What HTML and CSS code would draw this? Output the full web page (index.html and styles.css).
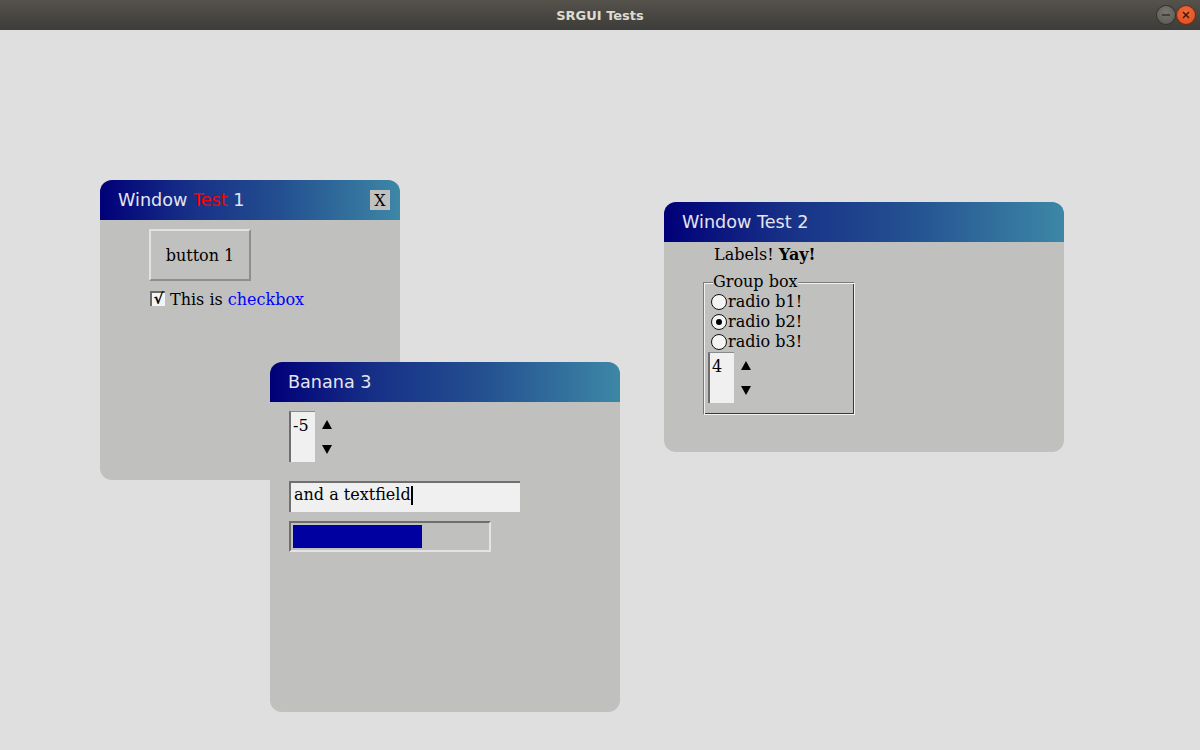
FILE: index.html
```html
<!DOCTYPE html>
<html>
<head>
<meta charset="utf-8">
<title>SRGUI Tests</title>
<link rel="stylesheet" href="styles.css">
</head>
<body>
<div class="topbar">
  <span class="app-title">SRGUI Tests</span>
  <div class="wm-btns">
    <span class="wm-btn wm-min"><svg width="18" height="18" viewBox="0 0 18 18"><line x1="5" y1="9" x2="13" y2="9" stroke="#2e2d2a" stroke-width="1.4"/></svg></span>
    <span class="wm-btn wm-close"><svg width="18" height="18" viewBox="0 0 18 18"><path d="M6 6 L12 12 M12 6 L6 12" stroke="#3a1a0c" stroke-width="1.5"/></svg></span>
  </div>
</div>
<div class="desktop">
  <div class="win win1">
    <div class="win-title">
      <span>Window <span class="red">Test</span> 1</span>
      <span class="close-x">X</span>
    </div>
    <div class="win1-body">
      <div class="btn">button 1</div>
      <div class="check-row">
        <span class="checkbox">√</span>
        <span>This is <span class="blue">checkbox</span></span>
      </div>
    </div>
  </div>

  <div class="win win2">
    <div class="win-title"><span>Window Test 2</span></div>
    <div class="win2-body">
      <div class="label">Labels! <b>Yay!</b></div>
      <fieldset class="group">
        <legend>Group box</legend>
        <div class="radio-row"><span class="radio"></span>radio b1!</div>
        <div class="radio-row"><span class="radio on"></span>radio b2!</div>
        <div class="radio-row"><span class="radio"></span>radio b3!</div>
        <div class="spin">
          <div class="spin-box">4</div>
          <div class="spin-arrows">
            <svg width="10" height="9" viewBox="0 0 10 9"><polygon points="5,0 10,9 0,9" fill="#000"/></svg>
            <svg width="10" height="9" viewBox="0 0 10 9"><polygon points="0,0 10,0 5,9" fill="#000"/></svg>
          </div>
        </div>
      </fieldset>
    </div>
  </div>

  <div class="win win3">
    <div class="win-title"><span>Banana 3</span></div>
    <div class="win3-body">
      <div class="spin">
        <div class="spin-box">-5</div>
        <div class="spin-arrows">
          <svg width="10" height="9" viewBox="0 0 10 9"><polygon points="5,0 10,9 0,9" fill="#000"/></svg>
          <svg width="10" height="9" viewBox="0 0 10 9"><polygon points="0,0 10,0 5,9" fill="#000"/></svg>
        </div>
      </div>
      <div class="textfield">and a textfield<span class="caret"></span></div>
      <div class="progress"><div class="progress-fill" style="width:129px"></div></div>
    </div>
  </div>
</div>
</body>
</html>
```

FILE: styles.css
```css
html, body {
  margin: 0;
  padding: 0;
}
body {
  width: 1200px;
  height: 750px;
  overflow: hidden;
  background: #dfdfdf;
  font-family: "DejaVu Serif", serif;
  font-size: 16px;
  color: #000;
}
.topbar {
  height: 30px;
  background: linear-gradient(to bottom, #55524c, #3d3c38);
  display: flex;
  align-items: center;
  justify-content: center;
  position: relative;
}
.app-title {
  font-family: "DejaVu Sans", sans-serif;
  font-weight: bold;
  font-size: 13px;
  color: #dfdbd2;
}
.wm-btns {
  position: absolute;
  right: 5px;
  top: 6px;
  display: flex;
  gap: 2px;
}
.wm-btn {
  width: 18px;
  height: 18px;
  border-radius: 50%;
  display: block;
}
.wm-btn svg { display: block; }
.wm-min {
  background: radial-gradient(circle at 50% 35%, #77766f, #575651);
  box-shadow: 0 0 0 1px #33322f;
}
.wm-close {
  background: radial-gradient(circle at 50% 35%, #f26a3b, #df4a17);
  box-shadow: 0 0 0 1px #7a2a0f;
}
.desktop {
  position: relative;
  height: 720px;
}
.win {
  position: absolute;
  background: #c0c0bf;
  border-radius: 12px;
}
.win1 { left: 100px; top: 150px; width: 300px; height: 300px; }
.win2 { left: 664px; top: 172px; width: 400px; height: 250px; }
.win3 { left: 270px; top: 332px; width: 350px; height: 350px; }
.win-title {
  height: 40px;
  border-radius: 12px 12px 0 0;
  background: linear-gradient(to right, #000078 0%, #173087 30%, #234f90 60%, #3d87a6 100%);
  display: flex;
  align-items: center;
  justify-content: space-between;
  padding: 0 10px 0 18px;
  font-family: "DejaVu Sans", sans-serif;
  font-size: 17.6px;
  color: #e4e4ee;
}
.red { color: #ff0000; }
.blue { color: #0000ff; }
.close-x {
  width: 20px;
  height: 20px;
  background: #c0c0bf;
  color: #000;
  font-family: "DejaVu Serif", serif;
  font-size: 16px;
  display: flex;
  align-items: center;
  justify-content: center;
}
.win1-body {
  padding: 9px 0 0 49px;
}
.btn {
  width: 102px;
  height: 52px;
  box-sizing: border-box;
  border: 2px solid;
  border-color: #e2e2e2 #8e8e8e #8e8e8e #e2e2e2;
  display: flex;
  align-items: center;
  justify-content: center;
}
.check-row {
  margin-top: 9px;
  margin-left: 1px;
  display: flex;
  align-items: center;
  gap: 5px;
  height: 16px;
}
.check-row > span:last-child {
  position: relative;
  top: 1px;
}
.checkbox {
  width: 15px;
  height: 15px;
  box-sizing: border-box;
  background: #f4f4f4;
  border-left: 2px solid #6a6a6a;
  border-top: 2px solid #6a6a6a;
  font-family: "DejaVu Sans", sans-serif;
  font-weight: bold;
  font-size: 15px;
  line-height: 13px;
  display: flex;
  justify-content: center;
}
.win3-body {
  padding: 9px 0 0 19px;
}
.spin {
  display: flex;
  gap: 7px;
}
.spin-box {
  width: 26px;
  height: 51px;
  box-sizing: border-box;
  background: #f0f0f0;
  border-left: 2px solid #6e6e6e;
  border-top: 1px solid #8a8a8a;
  padding: 4px 0 0 2px;
  line-height: 20px;
}
.spin-arrows {
  display: flex;
  flex-direction: column;
  padding-top: 9px;
  gap: 16px;
}
.spin-arrows svg { display: block; }
.textfield {
  margin-top: 19px;
  width: 231px;
  height: 31px;
  box-sizing: border-box;
  background: #f0f0f0;
  border-left: 2px solid #707070;
  border-top: 2px solid #707070;
  padding: 2px 0 0 3px;
  line-height: 20px;
  display: flex;
  align-items: flex-start;
}
.caret {
  display: inline-block;
  width: 2px;
  height: 19px;
  margin-top: 1px;
  background: #000;
}
.progress {
  margin-top: 9px;
  width: 202px;
  height: 31px;
  box-sizing: border-box;
  border: 2px solid;
  border-color: #6e6e6e #e4e4e4 #e4e4e4 #6e6e6e;
  padding: 2px;
}
.progress-fill {
  height: 23px;
  background: #0000a0;
}
.win2-body {
  padding: 3px 0 0 39px;
}
.label {
  padding-left: 11px;
  line-height: 20px;
}
.group {
  margin: 7px 0 0 0;
  width: 152px;
  box-sizing: border-box;
  padding: 0 4px 11px 4px;
  border: 1px solid;
  border-color: #7a7a7a #f2f2f2 #f2f2f2 #7a7a7a;
  box-shadow: inset 1px 1px 0 #f2f2f2, inset -1px -1px 0 #3a3a3a;
  min-inline-size: 0;
  line-height: 20px;
}
.group legend {
  padding: 0;
  margin-left: 5px;
  line-height: 20px;
  background: #c0c0bf;
}
.radio-row {
  display: flex;
  align-items: center;
  height: 20px;
  margin-left: 3px;
  gap: 1px;
}
.radio {
  width: 16px;
  height: 16px;
  box-sizing: border-box;
  border-radius: 50%;
  border: 1px solid #111;
  background: #f4f4f4;
  display: flex;
  align-items: center;
  justify-content: center;
}
.radio.on::after {
  content: "";
  width: 6px;
  height: 6px;
  border-radius: 50%;
  background: #000;
}
```
